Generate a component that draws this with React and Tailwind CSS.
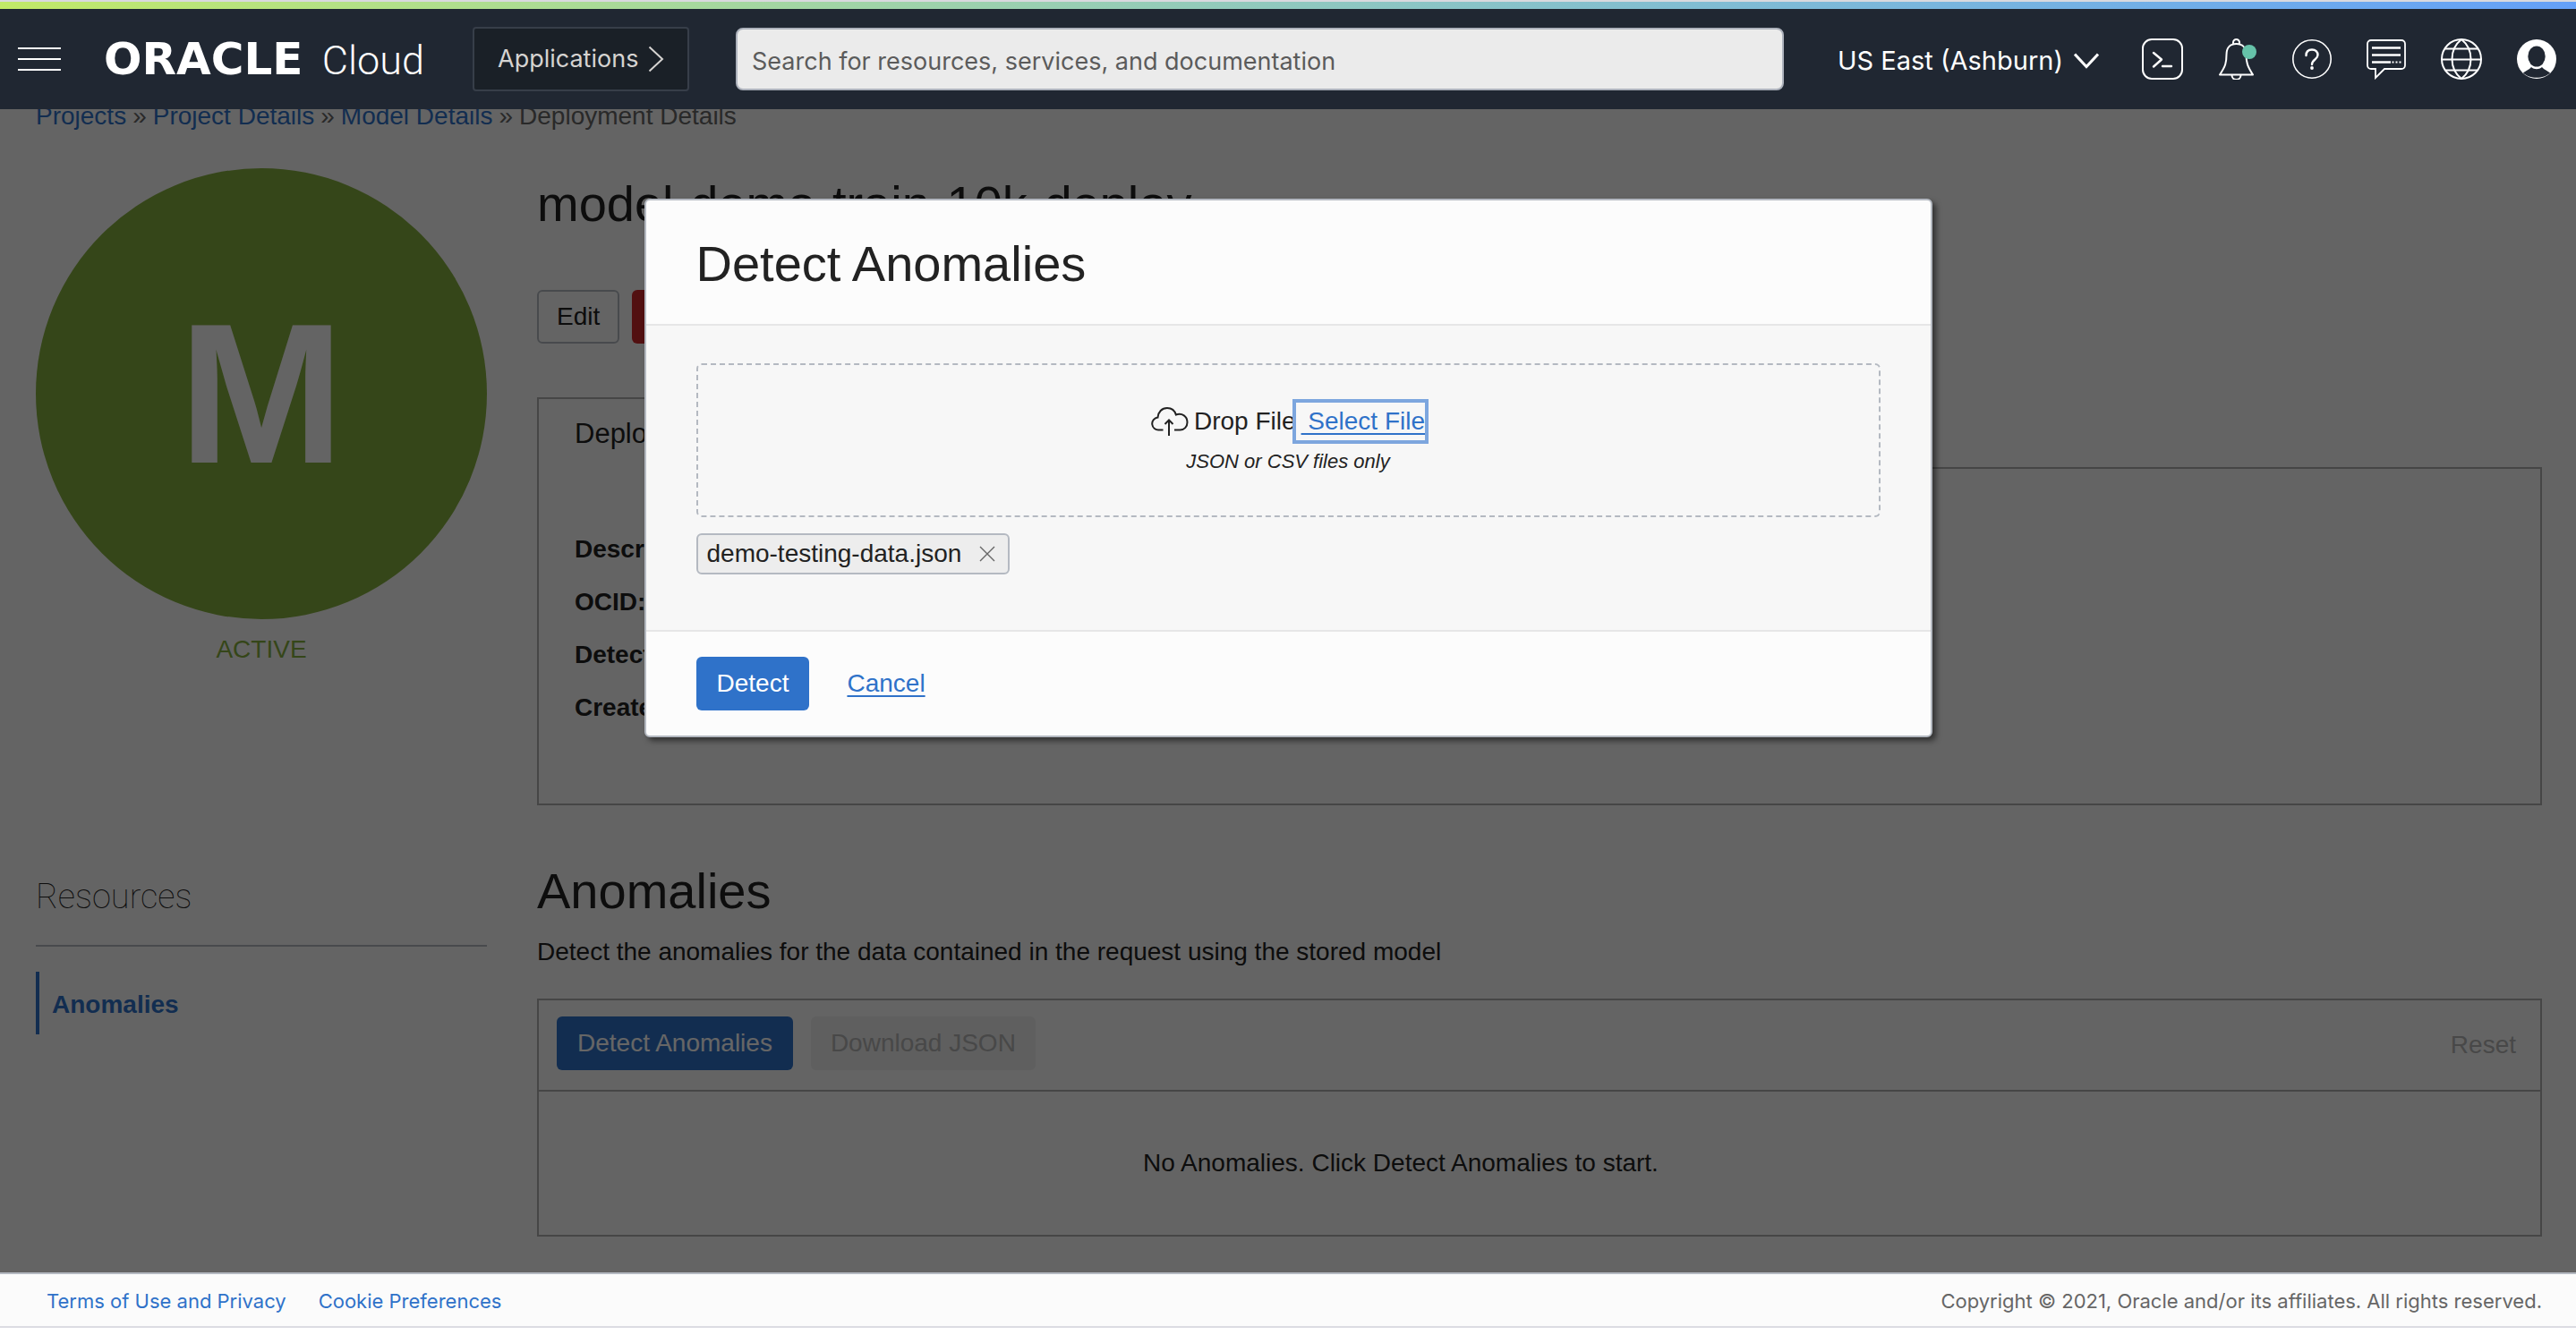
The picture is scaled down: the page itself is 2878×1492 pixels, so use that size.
const sans = 'font-["Liberation_Sans",Arial,sans-serif]';
const ui = 'font-["Inter","Roboto",sans-serif]';

function ConsoleIcon() {
  return (
    <svg viewBox="0 0 46 46" className="size-[46px]" fill="none" stroke="currentColor" strokeWidth="2">
      <rect x="1" y="1" width="44" height="44" rx="10" />
      <path d="M13 16l9 7.5-9 8" strokeWidth="2.4" strokeLinecap="round" strokeLinejoin="round" />
      <path d="M23 31h10" strokeWidth="2.4" strokeLinecap="round" />
    </svg>
  );
}

function BellIcon() {
  return (
    <svg viewBox="0 0 44 46" className="h-[46px] w-[44px]" fill="none" stroke="currentColor" strokeWidth="2">
      <path d="M17 6V4.5a3.5 3.5 0 0 1 7 0V6" />
      <path d="M20.500 6C13 6 9.500 11 9.500 18c0 9-1 13-7.500 22.500h37C33 31 31.500 27 31.500 18 31.500 11 28 6 20.500 6z" strokeLinejoin="round" />
      <path d="M15.500 41a5 5 0 0 0 10 0" />
      <circle cx="35" cy="15" r="8" fill="#66c2a9" stroke="none" />
    </svg>
  );
}

function HelpIcon() {
  return (
    <svg viewBox="0 0 44 44" className="size-11" fill="none" stroke="currentColor">
      <circle cx="22" cy="22" r="21.200" strokeWidth="1.600" />
      <path d="M15.500 18c0-4 2.500-6.500 6.500-6.500s6.500 2.500 6.500 6c0 5-6.500 5-6.500 10.500" strokeWidth="2.400" strokeLinecap="round" />
      <circle cx="22" cy="32" r="1.900" fill="currentColor" stroke="none" />
    </svg>
  );
}

function ChatIcon() {
  return (
    <svg viewBox="0 0 44 46" className="h-[46px] w-11" fill="none" stroke="currentColor" strokeWidth="1.800">
      <path d="M5 2h34a4 4 0 0 1 4 4v24a4 4 0 0 1-4 4H20l-10 10V34H5a4 4 0 0 1-4-4V6a4 4 0 0 1 4-4z" />
      <path d="M6 10.500h32M6 18.500h32M6 26.500h21" strokeWidth="2.400" />
      <path d="M28.500 26.500h10" strokeWidth="2.200" strokeDasharray="2 2" />
    </svg>
  );
}

function GlobeIcon() {
  return (
    <svg viewBox="0 0 46 46" className="size-[46px]" fill="none" stroke="currentColor" strokeWidth="2">
      <circle cx="23" cy="23" r="22" />
      <path d="M23 1C9 12 9 34 23 45M23 1c14 11 14 33 0 44" />
      <path d="M1 23.500h44M5 11.500h36M5 35.500h36" />
    </svg>
  );
}

function UserIcon() {
  return (
    <svg viewBox="0 0 44 44" className="size-11">
      <circle cx="22" cy="22" r="22" fill="#fff" />
      <ellipse cx="22" cy="19" rx="9.700" ry="11.500" fill="#202732" />
      <path d="M7 37.500c2-2 6-3 9-6.500 3.500 3 8.500 3 12 0 3 3.500 7 4.500 9 6.500-7 7-23 7-30 0z" fill="#202732" />
    </svg>
  );
}

function CloudUploadIcon() {
  return (
    <svg viewBox="0 0 42 34" className="h-[34px] w-[42px]" fill="none" stroke="currentColor" strokeWidth="2">
      <path d="M13.500 26.500H9a7 7 0 0 1-1.500-14C8 6.500 12 2 18 2c5 0 8.500 3 9.800 7.500 7-2.500 12.700 2 12.700 8.500 0 5-3.500 8.500-8 8.500H26" />
      <path d="M20 33V16M15.500 20l4.500-4.500 4.500 4.500" />
    </svg>
  );
}

const icons = [
  ["Cloud Shell", ConsoleIcon],
  ["Notifications", BellIcon],
  ["Help", HelpIcon],
  ["Chat", ChatIcon],
  ["Language", GlobeIcon],
  ["Profile", UserIcon],
];

function Header() {
  return (
    <header className={`border-t-2 border-[#d9d9de] bg-[#202732] text-white ${ui}`}>
      <div className="h-2 bg-linear-to-r from-[#c1e967] to-[#65a0f8]" />
      <div className="flex h-28 items-center pr-[22px] pl-5">
        <button aria-label="Open navigation menu" className="flex w-12 shrink-0 flex-col gap-2.5">
          <span className="h-0.5 w-full bg-white" />
          <span className="h-0.5 w-full bg-white" />
          <span className="h-0.5 w-full bg-white" />
        </button>
        <a href="#" className="ml-12 flex w-[358px] shrink-0 items-baseline justify-between pt-0.5 leading-[60px]">
          <span className='font-["DejaVu_Sans",sans-serif] text-[50px] font-bold'>ORACLE</span>
          <span className='font-["Roboto",sans-serif] text-[45px] font-light'>Cloud</span>
        </a>
        <button className="ml-[54px] flex h-[72px] w-[242px] shrink-0 items-center justify-between rounded border-2 border-[#373e49] bg-[#1a2027] px-[26px] text-[27px] text-[#d5d3d1]">
          Applications
          <svg viewBox="0 0 18 30" className="h-[30px] w-[18px]" fill="none" stroke="currentColor" strokeWidth="2">
            <path d="M1.500 1.500L16 15 1.500 28.500" />
          </svg>
        </button>
        <input
          type="search"
          aria-label="Search"
          placeholder="Search for resources, services, and documentation"
          className="ml-[52px] h-[70px] min-w-0 flex-1 rounded-lg border-2 border-[#adb2bc] bg-[#ebebeb] px-4 pt-1 text-[27px] text-[#222] placeholder:text-[#5b5b5b]"
        />
        <button className="ml-[60px] flex shrink-0 items-center gap-3 pt-1 text-[29px]">
          US East (Ashburn)
          <svg viewBox="0 0 28 18" className="h-[18px] w-7" fill="none" stroke="currentColor" strokeWidth="3">
            <path d="M1 1.500l13 14 13-14" />
          </svg>
        </button>
        <div className="ml-12 flex shrink-0 items-center gap-[39px]">
          {icons.map(([label, Icon]) => (
            <button key={label} aria-label={label}>
              <Icon />
            </button>
          ))}
        </div>
      </div>
    </header>
  );
}

function Breadcrumb() {
  return (
    <nav aria-label="Breadcrumb" className="-mt-2 flex gap-[7px] text-[28px] leading-8 whitespace-nowrap text-[#666]">
      <a href="#" className="text-[#2f72c9]">Projects</a>
      <span>»</span>
      <a href="#" className="text-[#2f72c9]">Project Details</a>
      <span>»</span>
      <a href="#" className="text-[#2f72c9]">Model Details</a>
      <span>»</span>
      <span>Deployment Details</span>
    </nav>
  );
}

function Dialog() {
  return (
    <div className="absolute inset-0 z-10 flex items-start justify-center bg-black/60 pt-[100px]">
      <section
        role="dialog"
        aria-labelledby="dialog-title"
        className="w-1/2 rounded-md border-2 border-[#b4b9c1] bg-[#fcfcfc] text-[28px] text-[#222] shadow-[4px_4px_6px_rgba(0,0,0,0.5)]"
      >
        <div className="flex h-[138px] items-center px-14 pt-1">
          <h2 id="dialog-title" className="text-[56px] leading-16">Detect Anomalies</h2>
        </div>
        <div className="border-y-2 border-[#e6e6e7] bg-[#f7f7f7] px-14 pt-[42px] pb-[62px]">
          <div className="flex h-[172px] flex-col items-center rounded-md border-2 border-dashed border-[#b4b9c1] pt-[42px]">
            <div className="flex h-[42px] items-center">
              <CloudUploadIcon />
              <span className="ml-1.5">Drop File</span>
              <a href="#" className="flex h-[42px] items-center pl-1.5 text-[#2f72c9] outline-4 outline-[#7da6de]">
                <span className="underline decoration-2 underline-offset-4">&nbsp;Select File</span>
              </a>
            </div>
            <p className="mt-2 text-[22px] leading-8 italic">JSON or CSV files only</p>
          </div>
          <div className="mt-[18px] inline-flex h-[46px] items-center gap-5 rounded-md border-2 border-[#b4b9c1] bg-[#ededed] px-3.5 pl-2.5">
            demo-testing-data.json
            <button aria-label="Remove demo-testing-data.json" className="text-[#666]">
              <svg viewBox="0 0 18 18" className="size-[18px]" stroke="currentColor" strokeWidth="1.400">
                <path d="M1 1l16 16M17 1L1 17" />
              </svg>
            </button>
          </div>
        </div>
        <div className="flex items-center gap-[42px] px-14 py-7">
          <button className="h-[60px] rounded-md bg-[#2f72c9] px-[23px] text-white">Detect</button>
          <a href="#" className="text-[#2f72c9] underline decoration-2 underline-offset-4">Cancel</a>
        </div>
      </section>
    </div>
  );
}

export default function App() {
  return (
    <div className={`flex min-h-screen flex-col bg-white ${sans}`}>
      <Header />
      <main className="relative flex-1 overflow-hidden bg-[#fbfbfb] pr-[38px] pb-10 pl-10 text-[28px] text-[#222]">
        <Breadcrumb />
        <div className="mt-[42px] grid grid-cols-[504px_1fr] gap-x-14 gap-y-16">
          <div className="flex flex-col items-center text-[#86af40]">
            <div className="flex size-[504px] items-center justify-center rounded-full bg-[#86af40] text-[222px] leading-none font-bold text-[#fbfbfb]">
              M
            </div>
            <p className="mt-[18px] leading-8">ACTIVE</p>
          </div>
          <div>
            <h1 className="mt-2 text-[56px] leading-16">model-demo-train-10k-deploy</h1>
            <div className="mt-16 flex gap-3.5">
              <button className="h-[60px] rounded-md border-2 border-[#b4b9c1] px-5">Edit</button>
              <button className="h-[60px] rounded-md bg-[#cd2a2c] px-[23px] text-white">Delete</button>
            </div>
            <div className="relative mt-[60px] -mb-0.5 flex h-20 w-fit items-center border-2 border-b-0 border-[#b0b0b0] bg-[#fbfbfb] px-10 text-[31px] whitespace-nowrap">
              Deployment Information
            </div>
            <div className="border-2 border-[#b0b0b0] px-10 pt-[60px] pb-[78px] leading-[59px] font-bold">
              <p>Description:</p>
              <p>OCID:</p>
              <p>Detection Type:</p>
              <p>Created:</p>
            </div>
          </div>
          <aside>
            <h2 className='border-b-2 border-[#b4b9c1] pb-4 font-["Roboto",sans-serif] text-[38px] leading-[76px] font-thin'>
              Resources
            </h2>
            <a href="#" className="mt-7 flex h-[70px] items-center border-l-4 border-[#2f72c9] pt-1 pl-3.5 font-bold text-[#2f72c9]">
              Anomalies
            </a>
          </aside>
          <section>
            <h2 className="text-[56px] leading-16">Anomalies</h2>
            <p className="mt-5 leading-8">Detect the anomalies for the data contained in the request using the stored model</p>
            <div className="mt-9 border-2 border-[#b0b0b0]">
              <div className="flex items-center border-b-2 border-[#b0b0b0] pt-[18px] pr-[27px] pb-[22px] pl-5">
                <button className="h-[60px] rounded-md bg-[#2f72c9] px-[23px] text-white">Detect Anomalies</button>
                <button disabled className="ml-5 h-[60px] rounded-md bg-[#ededed] px-[22px] text-[#b4b4b4]">Download JSON</button>
                <button disabled className="ml-auto pt-1 text-[#b4b4b4]">Reset</button>
              </div>
              <p className="py-16 pr-[310px] text-center leading-8">No Anomalies. Click Detect Anomalies to start.</p>
            </div>
          </section>
        </div>
        <Dialog />
      </main>
      <footer className={`mb-2 flex h-[62px] items-center border-t-2 border-b-2 border-t-[#b4b9c1] border-b-[#dcdce2] bg-[#fbfbfb] pt-0.5 pr-[38px] pl-[52px] text-[22px] ${ui}`}>
        <a href="#" className="text-[#2f72c9]">Terms of Use and Privacy</a>
        <a href="#" className="ml-9 text-[#2f72c9]">Cookie Preferences</a>
        <p className="ml-auto text-[#666]">Copyright © 2021, Oracle and/or its affiliates. All rights reserved.</p>
      </footer>
    </div>
  );
}
